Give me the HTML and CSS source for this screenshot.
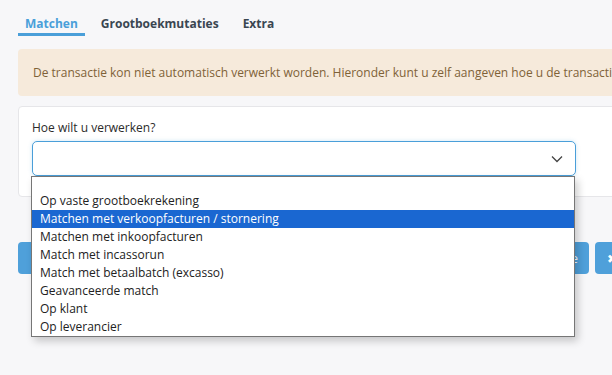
FILE: index.html
```html
<!DOCTYPE html>
<html lang="nl">
<head>
<meta charset="utf-8">
<title>Matchen</title>
<link rel="stylesheet" href="styles.css">
</head>
<body>
<div class="page">
  <nav class="tabs">
    <a class="tab active">Matchen</a>
    <a class="tab">Grootboekmutaties</a>
    <a class="tab">Extra</a>
  </nav>
  <div class="alert">De transactie kon niet automatisch verwerkt worden. Hieronder kunt u zelf aangeven hoe u de transactie wilt verwerken.</div>
  <div class="card">
    <label class="label">Hoe wilt u verwerken?</label>
    <div class="select-wrap">
      <div class="select">
        <svg class="chev" width="12" height="8" viewBox="0 0 12 8"><path d="M1 1.5 L6 6.5 L11 1.5" fill="none" stroke="#444" stroke-width="1.3"/></svg>
      </div>
      <ul class="listbox">
        <li class="opt empty"></li>
        <li class="opt">Op vaste grootboekrekening</li>
        <li class="opt sel">Matchen met verkoopfacturen / stornering</li>
        <li class="opt">Matchen met inkoopfacturen</li>
        <li class="opt">Match met incassorun</li>
        <li class="opt">Match met betaalbatch (excasso)</li>
        <li class="opt">Geavanceerde match</li>
        <li class="opt">Op klant</li>
        <li class="opt">Op leverancier</li>
      </ul>
    </div>
  </div>
  <div class="actions">
    <button class="btn">‹ Vorige</button>
    <div class="right">
      <button class="btn next">Volgende</button>
      <button class="btn icon">✖ Sluiten</button>
    </div>
  </div>
</div>
</body>
</html>
```
FILE: styles.css
```css
html {
  overflow: hidden;
  background: #f7f7f9;
}
body {
  margin: 0;
  padding: 0;
  min-height: 375px;
  background: #f7f7f9;
  font-family: "Open Sans", "Liberation Sans", sans-serif;
}
.page {
  width: 640px;
  padding: 10px 0 0 18px;
}
.tabs {
  display: flex;
  height: 30px;
}
.tab {
  font-size: 12px;
  font-weight: 700;
  color: #3a4651;
  padding: 5px 12px 0 12px;
  height: 26px;
  box-sizing: border-box;
  line-height: 17px;
}
.tab.active {
  color: #4a9fd9;
  border-bottom: 3px solid #4a9fd9;
  padding: 5px 7px 0 7px;
  margin-right: 4px;
}
.alert {
  margin-top: 9px;
  background: #f6eadb;
  color: #7f6238;
  font-size: 12px;
  border-radius: 4px;
  padding: 15px 15px;
  white-space: nowrap;
  height: 17px;
  line-height: 17px;
  overflow: hidden;
}
.card {
  margin-top: 10px;
  background: #fff;
  border: 1px solid #e6e6e9;
  border-radius: 4px;
  padding: 13px 0 20px 13px;
  height: 56px;
}
.label {
  display: block;
  font-size: 12px;
  color: #2b2b2b;
  line-height: 16px;
}
.select-wrap {
  position: relative;
  margin-top: 5px;
  width: 544px;
}
.select {
  height: 33px;
  border: 1px solid #4a9fd9;
  border-radius: 5px;
  background: #fff;
  display: flex;
  align-items: center;
  justify-content: flex-end;
  padding-right: 12px;
  box-shadow: 0 0 4px rgba(74,159,217,0.25);
}
.chev { display: block; }
.listbox {
  position: absolute;
  left: -1px;
  top: 35px;
  width: 542px;
  margin: 0;
  padding: 0;
  list-style: none;
  background: #fff;
  border: 1px solid #767676;
  box-shadow: 3px 4px 8px rgba(0,0,0,0.2);
  z-index: 5;
}
.opt {
  height: 18px;
  line-height: 18px;
  font-size: 12px;
  color: #222;
  padding-left: 8px;
  white-space: nowrap;
}
.opt.empty { height: 15px; }
.opt.sel { background: #1a67d1; color: #fff; }
.actions {
  margin-top: 45px;
  display: flex;
  justify-content: space-between;
  width: 633px;
}
.right { display: flex; gap: 6px; }
.btn {
  height: 32px;
  border: none;
  border-radius: 4px;
  background: #4fa0da;
  color: #fff;
  font-family: inherit;
  font-size: 12px;
  padding: 0 14px;
  white-space: nowrap;
}
.btn.next { padding: 0 11px 0 14px; }
.btn.icon { width: 56px; padding: 0 8px 0 12px; text-align: left; }
```
